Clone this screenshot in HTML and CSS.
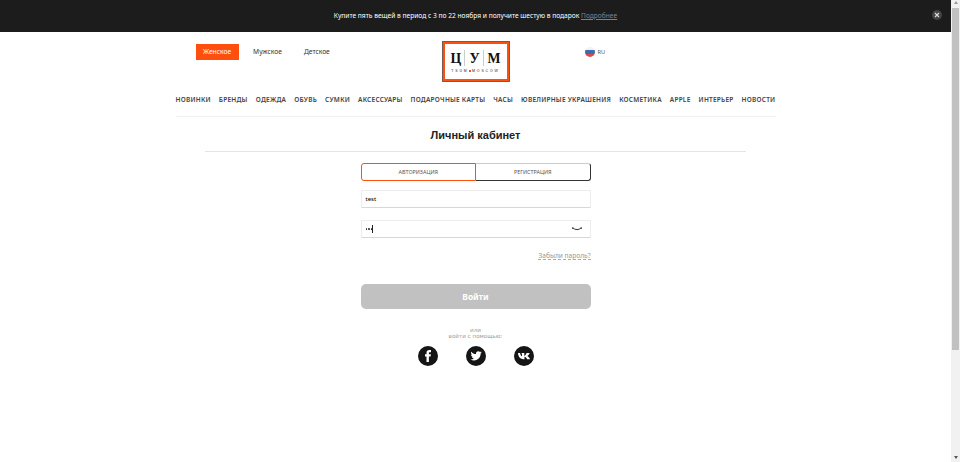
FILE: index.html
```html
<!DOCTYPE html>
<html lang="ru">
<head>
<meta charset="utf-8">
<title>Личный кабинет</title>
<link rel="stylesheet" href="styles.css">
</head>
<body>
<div class="page">
  <div class="promo">
    <p class="promo-text">Купите пять вещей в период с 3 по 22 ноября и получите шестую в подарок <a class="promo-link">Подробнее</a></p>
    <button class="promo-close" aria-label="Закрыть"><svg viewBox="0 0 10 10" width="10" height="10"><circle cx="5" cy="5" r="5" fill="#444"/><path d="M3 3l4 4M7 3l-4 4" stroke="#ddd" stroke-width="1.1"/></svg></button>
  </div>
  <header class="header">
    <nav class="sections">
      <a class="section active">Женское</a>
      <a class="section">Мужское</a>
      <a class="section">Детское</a>
    </nav>
    <a class="logo">
      <span class="logo-name"><span>Ц</span><i></i><span class="logo-u">У</span><i></i><span>М</span></span>
      <span class="logo-sub">TSUM<b></b>MOSCOW</span>
    </a>
    <div class="lang">
      <svg viewBox="0 0 10 10" width="10" height="10"><clipPath id="c"><circle cx="5" cy="5" r="5"/></clipPath><g clip-path="url(#c)"><path fill="#f1f1f1" d="M0 0h10v3H0z"/><path fill="#3c6cab" d="M0 3h10v4H0z"/><path fill="#d84a50" d="M0 7h10v3H0z"/></g></svg>
      <span>RU</span>
    </div>
  </header>
  <nav class="menu">
    <a>НОВИНКИ</a><a>БРЕНДЫ</a><a>ОДЕЖДА</a><a>ОБУВЬ</a><a>СУМКИ</a><a>АКСЕССУАРЫ</a><a>ПОДАРОЧНЫЕ КАРТЫ</a><a>ЧАСЫ</a><a>ЮВЕЛИРНЫЕ УКРАШЕНИЯ</a><a>КОСМЕТИКА</a><a>APPLE</a><a>ИНТЕРЬЕР</a><a>НОВОСТИ</a>
  </nav>
  <h1 class="title">Личный кабинет</h1>
  <form class="login">
    <div class="tabs"><a class="tab current">АВТОРИЗАЦИЯ</a><a class="tab">РЕГИСТРАЦИЯ</a></div>
    <div class="field">test</div>
    <div class="field password"><span class="dots"><i></i><i></i><i></i></span><span class="caret"></span>
      <svg class="eye" viewBox="0 0 10 4" width="10" height="4"><path d="M.3.5Q5 4.800 9.700.5M.2 1.700L1.400 1M9.800 1.700L8.600 1" fill="none" stroke="#333" stroke-width="1"/></svg>
    </div>
    <a class="forgot">Забыли пароль?</a>
    <button class="submit" type="button">Войти</button>
    <div class="or"><span>или</span><span>войти с помощью:</span></div>
    <div class="social">
      <svg viewBox="0 0 20 20" width="20" height="20"><circle cx="10" cy="10" r="10" fill="#151515"/><path fill="#fff" d="M8.500 16v-5.500H7V8.300h1.500V6.800C8.500 4.900 9.500 4 11.200 4H13v2.200h-1.200c-.7 0-.9.3-.9.9v1.200h2l-.3 2.200h-1.700V16z"/></svg>
      <svg viewBox="0 0 20 20" width="20" height="20"><circle cx="10" cy="10" r="10" fill="#151515"/><path fill="#fff" transform="translate(4.500 4.200) scale(.47)" d="M23.950 4.570a10 10 0 0 1-2.820.77 4.960 4.960 0 0 0 2.160-2.720c-.95.55-2 .96-3.130 1.180a4.920 4.920 0 0 0-8.380 4.480C7.690 8.100 4.070 6.130 1.640 3.160a4.820 4.820 0 0 0-.66 2.480c0 1.710.87 3.210 2.190 4.100a4.900 4.900 0 0 1-2.230-.62v.06a4.920 4.920 0 0 0 3.950 4.830 5 5 0 0 1-2.210.08 4.940 4.940 0 0 0 4.600 3.420A9.870 9.870 0 0 1 0 19.540a14 14 0 0 0 7.550 2.210c9.050 0 14-7.500 14-13.980 0-.21 0-.42-.02-.63a9.940 9.940 0 0 0 2.460-2.550z"/></svg>
      <svg viewBox="0 0 20 20" width="20" height="20"><circle cx="10" cy="10" r="10" fill="#151515"/><path fill="#fff" d="M4 7h2c.4 1.600 1.200 3 2 3.300V7.900L7.300 7h3v3c1-.4 1.700-1.700 2.300-3h3c-.3 1.300-1.300 2.300-2.300 3.100 1 .7 2.200 1.700 2.700 3.100h-2.900c-.5-1.200-1.400-2.100-2.600-2.400v2.400h-1C6.500 13.200 4.200 10.900 4 7z"/></svg>
    </div>
  </form>
</div>
<div class="scrollbar"><span class="arrow up"></span><span class="thumb"></span><span class="arrow down"></span></div>
</body>
</html>
```
FILE: styles.css
```css
* { box-sizing: border-box; }
body { margin: 0; display: flex; height: 462px; overflow: hidden; background: #fff; font-family: "Noto Sans", sans-serif; color: #222; }
p, h1 { margin: 0; }
.page { flex: 1; }
.promo { height: 32px; background: #1c1c1c; display: flex; align-items: center; padding: 0 9px 0 19px; }
.promo-text { flex: 1; text-align: center; font-size: 6.65px; line-height: 10px; color: #fff; white-space: nowrap; }
.promo-link { color: #7b8392; text-decoration: underline; }
.promo-close { border: 0; padding: 0; background: none; display: flex; margin-top: -2px; }
.header { width: 600px; height: 58px; margin: 0 auto; padding: 9px 0 0 20px; display: flex; align-items: flex-start; }
.sections { display: flex; gap: 7px; margin-top: 3px; width: 246px; }
.section { height: 16px; padding: 0 7.5px; font-size: 6.7px; line-height: 16px; white-space: nowrap; color: #333; }
.section.active { background: #ff4f0f; color: #fff; }
.logo { width: 68px; height: 41px; border: 3px solid #f9520f; outline: 1px solid #7a5a4d; outline-offset: -1px; display: flex; flex-direction: column; align-items: center; padding-top: 6px; }
.logo-name { display: flex; align-items: center; justify-content: space-between; width: 52px; height: 16px; font: bold 15px/16px "Liberation Serif", serif; color: #111; }
.logo-name span { transform: scaleX(.92); }
.logo-name i { width: 1px; height: 16px; background: #ccc; }
.logo-sub { display: flex; align-items: center; margin-top: 2px; font: 3.5px/6px "Liberation Sans", sans-serif; letter-spacing: 1.85px; color: #222; }
.logo-sub b { width: 2px; height: 2px; margin-right: 1.5px; background: #f9520f; }
.lang { display: flex; align-items: center; gap: 3px; margin: 6px 0 0 75px; font-size: 5.6px; line-height: 10px; color: #555; }
.menu { width: 600px; height: 27px; margin: 0 auto; padding-top: 4px; border-bottom: 1px solid #f1f1f1; display: flex; justify-content: space-between; font-size: 6.5px; line-height: 12px; font-weight: 600; letter-spacing: .23px; color: #444; white-space: nowrap; }
.title { width: 541px; height: 35px; margin: 0 auto; border-bottom: 1px solid #e5e5e5; text-align: center; font: bold 11px/36px "Liberation Sans", sans-serif; }
.login { width: 230px; margin: 11px auto 0; display: flex; flex-direction: column; }
.tabs { display: flex; height: 18px; }
.tab { flex: 1; border: 1px solid #333; border-top-color: #ccc; border-left: 0; border-radius: 0 3px 3px 0; font-size: 5.4px; line-height: 16px; text-align: center; color: #555; }
.current { border: 1px solid #f9520f; border-radius: 3px 0 0 3px; }
.field { height: 18px; margin-top: 9px; border: 1px solid #ededf0; border-bottom-color: #d7d7df; border-radius: 1px; padding: 0 4px; font-size: 6px; line-height: 17px; color: #000; display: flex; align-items: center; }
.password { margin-top: 12px; }
.dots { display: flex; gap: 1px; }
.dots i { width: 1.5px; height: 2px; border-radius: 1px; background: #222; }
.caret { width: 1px; height: 8px; background: #222; }
.eye { margin-left: auto; margin-right: 4px; }
.forgot { align-self: flex-end; margin-top: 14px; height: 8px; border-bottom: 1px dashed #aaa; font-size: 6.6px; line-height: 8px; color: #999; }
.submit { height: 25px; margin-top: 24px; border: 0; border-radius: 5px; background: #c1c1c1; color: #fff; font: bold 8.4px/25px "Noto Sans", sans-serif; padding: 0; }
.or { margin-top: 18px; display: flex; flex-direction: column; align-items: center; font: 5.6px/6px "DejaVu Sans", sans-serif; color: #999; }
.social { display: flex; justify-content: center; gap: 28px; margin-top: 7px; }
.scrollbar { width: 9px; height: 462px; background: #f1f1f1; display: flex; flex-direction: column; align-items: center; }
.thumb { width: 7px; height: 342px; margin-top: 3px; background: #c1c1c1; }
.arrow { width: 0; height: 0; border: 2px solid transparent; }
.up { margin-top: 1px; border-top: 0; border-bottom: 3px solid #999; margin-bottom: 1px; }
.down { margin-top: auto; margin-bottom: 3px; border-bottom: 0; border-top: 3px solid #555; }
```
